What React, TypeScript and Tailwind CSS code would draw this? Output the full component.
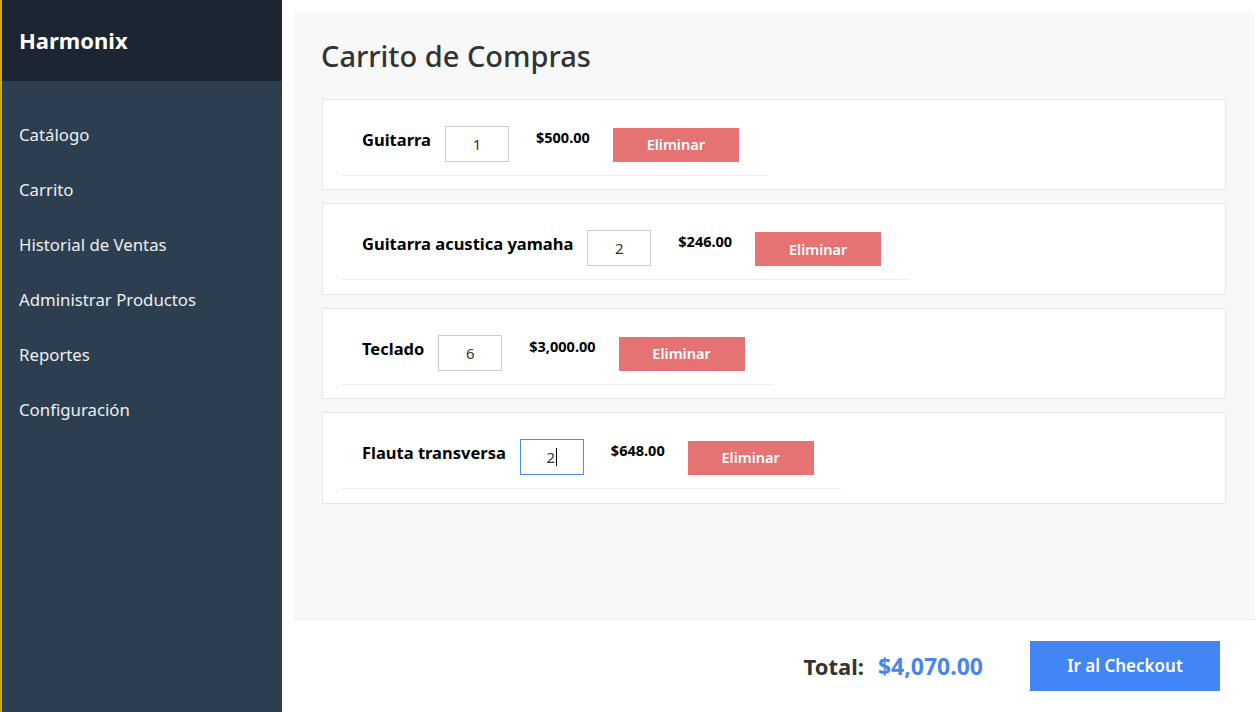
import React from "react";

type CartItem = { id: number; name: string; qty: number; price: string; focused?: boolean };

const ITEMS: CartItem[] = [
  { id: 1, name: "Guitarra", qty: 1, price: "$500.00" },
  { id: 2, name: "Guitarra acustica yamaha", qty: 2, price: "$246.00" },
  { id: 3, name: "Teclado", qty: 6, price: "$3,000.00" },
  { id: 4, name: "Flauta transversa", qty: 2, price: "$648.00", focused: true },
];

const NAV = ["Catálogo", "Carrito", "Historial de Ventas", "Administrar Productos", "Reportes", "Configuración"];

const FONT = "font-['Segoe_UI','Noto_Sans','Open_Sans',sans-serif]";

function Sidebar() {
  return (
    <aside className="flex w-[282px] shrink-0 flex-col border-l-2 border-[#d1ad00] bg-[#2c3e50]">
      <div className="flex h-[81px] items-center bg-[#1c2633] pl-[17px]">
        <span className="text-[22px] font-bold text-white">Harmonix</span>
      </div>
      <nav className="pt-[26px]">
        {NAV.map((label) => (
          <div key={label} className="flex h-[55px] items-center pl-[17px] text-[16.8px] text-[#ecf0f1]">
            {label}
          </div>
        ))}
      </nav>
    </aside>
  );
}

function CartRow({ item }: { item: CartItem }) {
  return (
    <div className="border border-[#e8e8e8] bg-white px-[19px] pt-[19px] pb-[13.4px]">
      <div className="inline-flex h-[57px] items-start border-b border-[#eeeeee] pl-[20px] pr-[28px]">
        <span className="mt-[9px] text-[16.5px] leading-[24px] font-bold text-black">{item.name}</span>
        <div
          className={
            "relative mt-[7px] ml-[14px] flex h-[36px] w-[64px] items-center justify-center border bg-white text-[15px] text-[#333] " +
            (item.focused ? "border-[#4a90e2]" : "border-[#cccccc]")
          }
        >
          {item.qty}
          {item.focused && <span className="ml-[1px] h-[18px] w-px bg-black" />}
        </div>
        <span className="mt-[8px] ml-[27px] text-[14.5px] leading-[20px] font-bold text-black">{item.price}</span>
        <button className="mt-[9px] ml-[23px] flex h-[34px] w-[126px] items-center justify-center bg-[#e57373] text-[14.5px] font-semibold text-white">
          Eliminar
        </button>
      </div>
    </div>
  );
}

export default function App() {
  return (
    <div className={`flex h-[712px] w-full bg-white ${FONT}`}>
      <Sidebar />
      <main className="flex flex-1 flex-col">
        <section className="mt-[12px] ml-[12px] mr-[2px] flex-1 bg-[#f8f8f8] pl-[28px] pr-[28px] pt-[25px]">
          <h1 className="-ml-[1px] mb-[25px] text-[29px] leading-[37px] font-medium text-[#333]">Carrito de Compras</h1>
          <div className="flex flex-col gap-[13px]">
            {ITEMS.map((item) => (
              <CartRow key={item.id} item={item} />
            ))}
          </div>
        </section>
        <footer className="ml-[12px] flex h-[93px] items-center justify-end border-t border-[#eeeeee] pr-[36px]">
          <span className="text-[22px] font-bold text-[#333]">Total:</span>
          <span className="ml-[14px] text-[23px] font-bold text-[#4a86e8]">$4,070.00</span>
          <button className="ml-[47px] h-[50px] w-[190px] bg-[#4285f4] text-[17px] font-semibold text-white">
            Ir al Checkout
          </button>
        </footer>
      </main>
    </div>
  );
}
